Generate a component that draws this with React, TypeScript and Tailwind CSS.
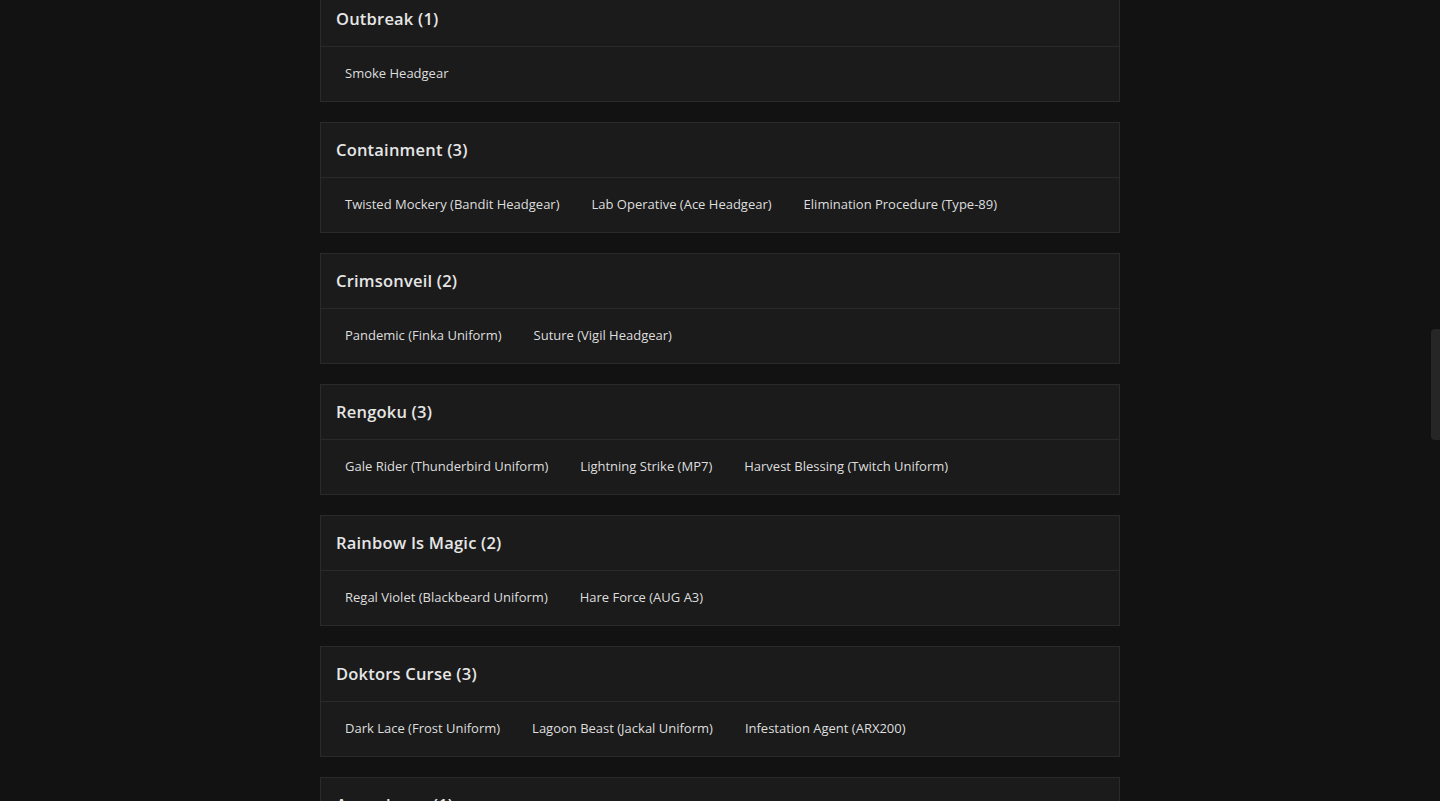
const sets = [
  { name: "Outbreak", items: ["Smoke Headgear"] },
  {
    name: "Containment",
    items: ["Twisted Mockery (Bandit Headgear)", "Lab Operative (Ace Headgear)", "Elimination Procedure (Type-89)"],
  },
  { name: "Crimsonveil", items: ["Pandemic (Finka Uniform)", "Suture (Vigil Headgear)"] },
  {
    name: "Rengoku",
    items: ["Gale Rider (Thunderbird Uniform)", "Lightning Strike (MP7)", "Harvest Blessing (Twitch Uniform)"],
  },
  { name: "Rainbow Is Magic", items: ["Regal Violet (Blackbeard Uniform)", "Hare Force (AUG A3)"] },
  {
    name: "Doktors Curse",
    items: ["Dark Lace (Frost Uniform)", "Lagoon Beast (Jackal Uniform)", "Infestation Agent (ARX200)"],
  },
  { name: "Apocalypse", items: ["Smoke Headgear"] },
];

const App = () => (
  <div
    className="relative h-[801px] overflow-hidden bg-[#121212]"
    style={{ fontFamily: '"Open Sans", "Noto Sans", sans-serif' }}
  >
    <div className="mx-auto w-[800px] -mt-[9px] flex flex-col gap-5">
      {sets.map((s) => (
        <div key={s.name} className="border border-[#2a2a2a] bg-[#1b1b1b]">
          <div className="h-[55px] flex items-center px-4 border-b border-[#2a2a2a]">
            <h3 className="text-[16.5px] font-semibold text-[#e6e6e6] tracking-[0.2px] -ml-px">
              {s.name} ({s.items.length})
            </h3>
          </div>
          <div className="h-[54px] flex items-center gap-4 px-4">
            {s.items.map((it) => (
              <span key={it} className="px-2 text-[13px] font-medium text-[#dedede]">
                {it}
              </span>
            ))}
          </div>
        </div>
      ))}
    </div>
    <div className="absolute right-0 top-[329px] w-[9px] h-[111px] rounded-l bg-[#262626]" />
  </div>
);

export default App;
